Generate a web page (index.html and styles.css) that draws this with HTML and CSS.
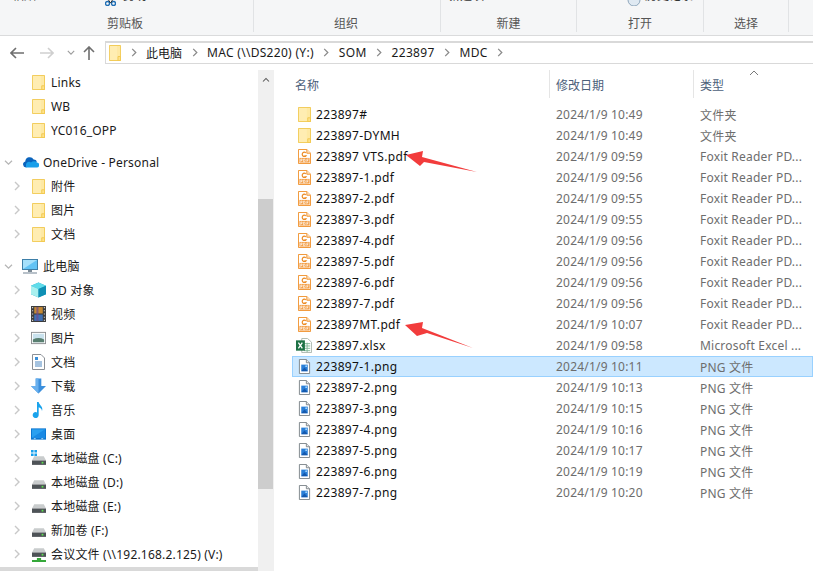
FILE: index.html
```html
<!DOCTYPE html>
<html lang="zh">
<head>
<meta charset="utf-8">
<title>MDC</title>
<link rel="stylesheet" href="styles.css">
</head>
<body>
<svg class="defs" width="0" height="0" aria-hidden="true">
  <symbol id="folder" viewBox="0 0 14 16" preserveAspectRatio="none">
    <path d="M.5.5H13.5V15.5H.5Z" fill="#fee9a4" stroke="#f1c84f"/>
    <path d="M1 1H9.5V15H1Z" fill="#fff0bd" opacity=".6"/>
    <path d="M10.5 15.5V11.5H13.5V15.5Z" fill="#ffe28a" stroke="#f1c84f"/>
  </symbol>
  <symbol id="pdf" viewBox="0 0 14 16" preserveAspectRatio="none">
    <path d="M.5.5H9.5L13.5 4.5V15.5H.5Z" fill="#fff" stroke="#f0902a"/>
    <path d="M9.5.5V4.5H13.5" fill="#fde3c4" stroke="#f0902a"/>
    <path d="M8.4 4A2.3 2.3 0 1 0 8.6 7.2H6.8" fill="none" stroke="#ec8a22" stroke-width="1.3"/>
    <rect x="1.5" y="9.5" width="11" height="5" fill="#f3a04a"/>
    <path d="M3 10.7v3M3 10.7h1.4v1.5H3M6 10.7v3h1.2l.6-1-.6-2ZM9.6 13.7v-3h1.8M9.6 12.2h1.4" fill="none" stroke="#fff" stroke-width=".7"/>
  </symbol>
  <symbol id="xlsx" viewBox="0 0 18 16" preserveAspectRatio="none">
    <path d="M6.5.5H13L17.5 4.5V15.5H6.5Z" fill="#fff" stroke="#a9b5ad"/>
    <path d="M9 6h7M9 8.5h7M9 11h7M9 13.5h7M12.5 5v10" stroke="#7fb596" stroke-width="1"/>
    <rect x="0" y="2.5" width="10" height="11" fill="#1d7145"/>
    <path d="M2.7 5l4.4 6M7.1 5l-4.4 6" stroke="#fff" stroke-width="1.5"/>
  </symbol>
  <symbol id="png" viewBox="0 0 14 16" preserveAspectRatio="none">
    <path d="M1.5.5H9L12.5 4V15.5H1.5Z" fill="#fff" stroke="#7c8389"/>
    <path d="M9 .5V4H12.5" fill="#e8e8e8" stroke="#7c8389"/>
    <rect x="3.5" y="6" width="7" height="7" fill="#2a7fd8"/>
    <path d="M3.5 13L7 9l3.5 4Z" fill="#1559ae"/>
    <circle cx="8.8" cy="7.6" r="1" fill="#a6d6fa"/>
  </symbol>
  <symbol id="cloud" viewBox="0 0 17 12">
    <path d="M4 11.5A3 3 0 0 1 3.3 5.6 4.4 4.4 0 0 1 11.6 3.6 3.6 3.6 0 0 1 15 5.6L8 8.6Z" fill="#0b64bd"/>
    <path d="M4 11.5H14.4A2.4 2.4 0 0 0 15 6.5 4 4 0 0 0 9 6.6 3 3 0 0 0 4 8.6Z" fill="#1a9fea"/>
  </symbol>
  <symbol id="pc" viewBox="0 0 16 15">
    <rect x=".5" y=".5" width="15" height="10" fill="#62c3f5" stroke="#3d7fa8"/>
    <path d="M1 1H15L1 10Z" fill="#a5e0fb"/>
    <path d="M6 11h4v2H6Z" fill="#7d8b96"/>
    <path d="M1 14h14" stroke="#9aa7b2" stroke-width="1.4"/>
  </symbol>
  <symbol id="cube" viewBox="0 0 16 16">
    <path d="M8 0L16 3.5V12.5L8 16 0 12.5V3.5Z" fill="#20a5c9"/>
    <path d="M8 0L16 3.5 8 7 0 3.5Z" fill="#5fdcea"/>
    <path d="M0 3.5L8 7V16L0 12.5Z" fill="#a9f0ef"/>
    <path d="M8 7L16 3.5V12.5L8 16Z" fill="#0f8fb4"/>
  </symbol>
  <symbol id="film" viewBox="0 0 14 15">
    <rect width="14" height="15" fill="#3c3c3c"/>
    <path d="M1 1.5h1M1 4.5h1M1 7.5h1M1 10.5h1M1 13.5h1M12 1.5h1M12 4.5h1M12 7.5h1M12 10.5h1M12 13.5h1" stroke="#ddd"/>
    <rect x="3" y="1" width="8" height="6" fill="#c58a34"/>
    <rect x="3" y="8" width="8" height="6" fill="#3f70b5"/>
    <path d="M5 1h2v13H5Z" fill="#6e4a8c" opacity=".7"/>
  </symbol>
  <symbol id="pic" viewBox="0 0 16 13">
    <rect x=".5" y=".5" width="15" height="12" fill="#fff" stroke="#8c8f92"/>
    <rect x="2" y="2" width="12" height="9" fill="#c9e2ee"/>
    <path d="M2 8q6-3 12 0v3H2Z" fill="#587f70"/>
  </symbol>
  <symbol id="doc" viewBox="0 0 13 16">
    <path d="M.5.5H9L12.5 4V15.5H.5Z" fill="#fff" stroke="#8b9096"/>
    <rect x="3" y="3" width="3" height="3" fill="#3a8fd9"/>
    <path d="M3 8h7M3 10h7M3 12h7" stroke="#4c88c2"/>
  </symbol>
  <symbol id="down" viewBox="0 0 16 16">
    <path d="M5 0H11V8H16L8 16 0 8H5Z" fill="#3b8fdd"/>
    <path d="M5 0H8V16L0 8H5Z" fill="#69b0ee"/>
  </symbol>
  <symbol id="music" viewBox="0 0 12 16">
    <path d="M4.5 0H6.2C6.6 3 11 4.5 9.5 9 9.4 6.8 7.6 5.6 6.2 5.2V13A3 3 0 1 1 4.5 10.4Z" fill="#1aa3ec"/>
  </symbol>
  <symbol id="desk" viewBox="0 0 16 12">
    <rect width="16" height="12" fill="#0c76d0"/>
    <rect x="1" y="1" width="14" height="9" fill="#2aa0f0"/>
    <path d="M1 10L15 1v9Z" fill="#1a8ae4"/>
    <path d="M3 11h2M11 11h2" stroke="#bfe3fb"/>
  </symbol>
  <symbol id="drive" viewBox="0 0 16 10">
    <path d="M2.5 0H13.5L16 5H0Z" fill="#c9cccd"/>
    <rect y="5" width="16" height="5" fill="#4e5357"/>
    <rect x="11" y="6.5" width="2" height="2" fill="#5be04d"/>
  </symbol>
  <symbol id="win" viewBox="0 0 6 6">
    <path d="M0 0h2.6v2.6H0ZM3.4 0H6v2.6H3.4ZM0 3.4h2.6V6H0ZM3.4 3.4H6V6H3.4Z" fill="#18a0ec"/>
  </symbol>
  <symbol id="chev" viewBox="0 0 8 10">
    <path d="M2 1l4 4-4 4" fill="none" stroke="currentColor" stroke-width="1.4"/>
  </symbol>
  <symbol id="chevd" viewBox="0 0 10 8">
    <path d="M1 2l4 4 4-4" fill="none" stroke="currentColor" stroke-width="1.4"/>
  </symbol>
</svg>

<header class="ribbon">
  <div class="group">
    <div class="peek peek-clip">
      <span class="peek-a">粘贴</span>
      <svg class="scissors" viewBox="0 0 11 7"><circle cx="2.5" cy="3.5" r="2" fill="none" stroke="#1f6fb5" stroke-width="1.4"/><circle cx="8.5" cy="3.5" r="2" fill="none" stroke="#1f6fb5" stroke-width="1.4"/><path d="M3.5 0l2 3 2-3" fill="none" stroke="#333"/></svg>
      <span class="peek-b">剪切</span>
    </div>
    <div class="label label-a">剪贴板</div>
  </div>
  <div class="group"><div class="peek"></div><div class="label label-b">组织</div></div>
  <div class="group">
    <div class="peek peek-clip"><span class="peek-c">新建项</span></div>
    <div class="label">新建</div>
  </div>
  <div class="group">
    <div class="peek peek-clip">
      <svg class="prop" viewBox="0 0 14 7"><circle cx="7" cy="0" r="6" fill="#dfe9f2" stroke="#8ea6bb"/></svg>
      <span class="peek-d">历史记录</span>
    </div>
    <div class="label">打开</div>
  </div>
  <div class="group"><div class="peek"></div><div class="label">选择</div></div>
  <div class="group group-end"></div>
</header>

<nav class="navbar">
  <div class="nav-buttons">
    <svg class="nav-back" viewBox="0 0 14 12"><path d="M1 6h13M6 1L1 6l5 5" fill="none" stroke="#6f6f6f" stroke-width="1.6"/></svg>
    <svg class="nav-fwd" viewBox="0 0 14 12"><path d="M13 6H0M8 1l5 5-5 5" fill="none" stroke="#cfcfcf" stroke-width="1.6"/></svg>
    <svg class="nav-drop"><use href="#chevd"/></svg>
    <svg class="nav-up" viewBox="0 0 12 14"><path d="M6 14V1M1 6l5-5 5 5" fill="none" stroke="#6f6f6f" stroke-width="1.6"/></svg>
  </div>
  <div class="address">
    <svg class="addr-folder"><use href="#folder"/></svg>
    <svg class="crumb-sep"><use href="#chev"/></svg>
    <span>此电脑</span>
    <svg class="crumb-sep"><use href="#chev"/></svg>
    <span class="lat">MAC (\\DS220) (Y:)</span>
    <svg class="crumb-sep"><use href="#chev"/></svg>
    <span class="lat">SOM</span>
    <svg class="crumb-sep"><use href="#chev"/></svg>
    <span class="lat">223897</span>
    <svg class="crumb-sep"><use href="#chev"/></svg>
    <span class="lat">MDC</span>
    <svg class="crumb-sep"><use href="#chev"/></svg>
  </div>
</nav>

<div class="content">
  <aside class="side">
    <div class="tree-wrap">
      <ul class="tree">
        <li class="node child"><span class="tw"></span><svg class="ico-f"><use href="#folder"/></svg><span>Links</span></li>
        <li class="node child"><span class="tw"></span><svg class="ico-f"><use href="#folder"/></svg><span>WB</span></li>
        <li class="node child"><span class="tw"></span><svg class="ico-f"><use href="#folder"/></svg><span>YC016_OPP</span></li>
        <li class="node root spaced"><svg class="tw-svg"><use href="#chevd"/></svg><svg class="ico-cloud"><use href="#cloud"/></svg><span>OneDrive - Personal</span></li>
        <li class="node child"><svg class="tw-svg-r"><use href="#chev"/></svg><svg class="ico-f"><use href="#folder"/></svg><span>附件</span></li>
        <li class="node child"><svg class="tw-svg-r"><use href="#chev"/></svg><svg class="ico-f"><use href="#folder"/></svg><span>图片</span></li>
        <li class="node child"><svg class="tw-svg-r"><use href="#chev"/></svg><svg class="ico-f"><use href="#folder"/></svg><span>文档</span></li>
        <li class="node root spaced"><svg class="tw-svg"><use href="#chevd"/></svg><svg class="ico-pc"><use href="#pc"/></svg><span>此电脑</span></li>
        <li class="node child"><svg class="tw-svg-r"><use href="#chev"/></svg><svg class="ico"><use href="#cube"/></svg><span>3D 对象</span></li>
        <li class="node child"><svg class="tw-svg-r"><use href="#chev"/></svg><svg class="ico"><use href="#film"/></svg><span>视频</span></li>
        <li class="node child"><svg class="tw-svg-r"><use href="#chev"/></svg><svg class="ico"><use href="#pic"/></svg><span>图片</span></li>
        <li class="node child"><svg class="tw-svg-r"><use href="#chev"/></svg><svg class="ico"><use href="#doc"/></svg><span>文档</span></li>
        <li class="node child"><svg class="tw-svg-r"><use href="#chev"/></svg><svg class="ico"><use href="#down"/></svg><span>下载</span></li>
        <li class="node child"><svg class="tw-svg-r"><use href="#chev"/></svg><svg class="ico"><use href="#music"/></svg><span>音乐</span></li>
        <li class="node child"><svg class="tw-svg-r"><use href="#chev"/></svg><svg class="ico"><use href="#desk"/></svg><span>桌面</span></li>
        <li class="node child"><svg class="tw-svg-r"><use href="#chev"/></svg><span class="drive-box"><svg class="win"><use href="#win"/></svg><svg class="drv"><use href="#drive"/></svg></span><span>本地磁盘 (C:)</span></li>
        <li class="node child"><svg class="tw-svg-r"><use href="#chev"/></svg><span class="drive-box"><svg class="drv"><use href="#drive"/></svg></span><span>本地磁盘 (D:)</span></li>
        <li class="node child"><svg class="tw-svg-r"><use href="#chev"/></svg><span class="drive-box"><svg class="drv"><use href="#drive"/></svg></span><span>本地磁盘 (E:)</span></li>
        <li class="node child"><svg class="tw-svg-r"><use href="#chev"/></svg><span class="drive-box"><svg class="drv"><use href="#drive"/></svg></span><span>新加卷 (F:)</span></li>
        <li class="node child"><svg class="tw-svg-r"><use href="#chev"/></svg><span class="drive-box net"><svg class="drv"><use href="#drive"/></svg><span class="net-foot"></span></span><span>会议文件 (\\192.168.2.125) (V:)</span></li>
      </ul>
      <div class="hscroll"></div>
    </div>
    <div class="vscroll">
      <svg class="vs-up"><use href="#chevd"/></svg>
      <div class="vs-track-top"></div>
      <div class="vs-thumb"></div>
    </div>
  </aside>

  <main class="files">
    <div class="head">
      <div class="col-name">名称</div>
      <div class="col-date">修改日期</div>
      <div class="col-type">类型</div>
      <svg class="sort" viewBox="0 0 10 6"><path d="M1 5l4-4 4 4" fill="none" stroke="#7a7a7a"/></svg>
    </div>
    <div class="rows">
      <div class="row"><div class="col-name"><svg class="fi"><use href="#folder"/></svg>223897#</div><div class="col-date">2024/1/9 10:49</div><div class="col-type">文件夹</div></div>
      <div class="row"><div class="col-name"><svg class="fi"><use href="#folder"/></svg>223897-DYMH</div><div class="col-date">2024/1/9 10:49</div><div class="col-type">文件夹</div></div>
      <div class="row"><div class="col-name"><svg class="fi"><use href="#pdf"/></svg>223897 VTS.pdf</div><div class="col-date">2024/1/9 09:59</div><div class="col-type">Foxit Reader PD...</div></div>
      <div class="row"><div class="col-name"><svg class="fi"><use href="#pdf"/></svg>223897-1.pdf</div><div class="col-date">2024/1/9 09:56</div><div class="col-type">Foxit Reader PD...</div></div>
      <div class="row"><div class="col-name"><svg class="fi"><use href="#pdf"/></svg>223897-2.pdf</div><div class="col-date">2024/1/9 09:55</div><div class="col-type">Foxit Reader PD...</div></div>
      <div class="row"><div class="col-name"><svg class="fi"><use href="#pdf"/></svg>223897-3.pdf</div><div class="col-date">2024/1/9 09:55</div><div class="col-type">Foxit Reader PD...</div></div>
      <div class="row"><div class="col-name"><svg class="fi"><use href="#pdf"/></svg>223897-4.pdf</div><div class="col-date">2024/1/9 09:56</div><div class="col-type">Foxit Reader PD...</div></div>
      <div class="row"><div class="col-name"><svg class="fi"><use href="#pdf"/></svg>223897-5.pdf</div><div class="col-date">2024/1/9 09:56</div><div class="col-type">Foxit Reader PD...</div></div>
      <div class="row"><div class="col-name"><svg class="fi"><use href="#pdf"/></svg>223897-6.pdf</div><div class="col-date">2024/1/9 09:56</div><div class="col-type">Foxit Reader PD...</div></div>
      <div class="row"><div class="col-name"><svg class="fi"><use href="#pdf"/></svg>223897-7.pdf</div><div class="col-date">2024/1/9 09:56</div><div class="col-type">Foxit Reader PD...</div></div>
      <div class="row"><div class="col-name"><svg class="fi"><use href="#pdf"/></svg>223897MT.pdf</div><div class="col-date">2024/1/9 10:07</div><div class="col-type">Foxit Reader PD...</div></div>
      <div class="row"><div class="col-name"><svg class="fi fi-x"><use href="#xlsx"/></svg>223897.xlsx</div><div class="col-date">2024/1/9 09:58</div><div class="col-type">Microsoft Excel ...</div></div>
      <div class="row selected"><div class="col-name"><svg class="fi"><use href="#png"/></svg>223897-1.png</div><div class="col-date">2024/1/9 10:11</div><div class="col-type">PNG 文件</div></div>
      <div class="row"><div class="col-name"><svg class="fi"><use href="#png"/></svg>223897-2.png</div><div class="col-date">2024/1/9 10:13</div><div class="col-type">PNG 文件</div></div>
      <div class="row"><div class="col-name"><svg class="fi"><use href="#png"/></svg>223897-3.png</div><div class="col-date">2024/1/9 10:15</div><div class="col-type">PNG 文件</div></div>
      <div class="row"><div class="col-name"><svg class="fi"><use href="#png"/></svg>223897-4.png</div><div class="col-date">2024/1/9 10:16</div><div class="col-type">PNG 文件</div></div>
      <div class="row"><div class="col-name"><svg class="fi"><use href="#png"/></svg>223897-5.png</div><div class="col-date">2024/1/9 10:17</div><div class="col-type">PNG 文件</div></div>
      <div class="row"><div class="col-name"><svg class="fi"><use href="#png"/></svg>223897-6.png</div><div class="col-date">2024/1/9 10:19</div><div class="col-type">PNG 文件</div></div>
      <div class="row"><div class="col-name"><svg class="fi"><use href="#png"/></svg>223897-7.png</div><div class="col-date">2024/1/9 10:20</div><div class="col-type">PNG 文件</div></div>
    </div>
  </main>
</div>

<svg class="annotations" viewBox="0 0 813 571" aria-hidden="true">
  <polygon points="406,155 423,151 422,157 477,172 424,162 420,166" fill="#f23c3c"/>
  <polygon points="405,325 423,322 422,328 473,348 427,333 417,336" fill="#f23c3c"/>
</svg>
</body>
</html>
```
FILE: styles.css
```css
* { box-sizing: border-box; }
html, body { margin: 0; padding: 0; }
body {
  position: relative;
  width: 813px;
  height: 571px;
  overflow: hidden;
  background: #fff;
  color: #111;
  font-family: "Noto Sans", "Noto Sans CJK SC", sans-serif;
  font-size: 12px;
}
.defs { position: absolute; }
ul { list-style: none; margin: 0; padding: 0; }

/* ribbon */
.ribbon {
  display: grid;
  grid-template-columns: 254px 187px 136px 127px 85px 24px;
  height: 36px;
  background: #f5f6f7;
  border-bottom: 1px solid #dadbdc;
}
.group {
  height: 32px;
  border-right: 1px solid #e1e3e5;
  display: flex;
  flex-direction: column;
}
.group-end { border-right: 0; }
.peek { height: 6px; flex: none; display: flex; align-items: flex-start; }
.peek-clip { overflow: hidden; }
.peek-clip span { margin-top: -12px; color: #333; line-height: 16px; }
.peek-a { margin-left: 12px; width: 93px; }
.peek-b { margin-left: 7px; }
.peek-c { margin-left: 7px; }
.scissors { width: 11px; height: 7px; }
.prop { width: 14px; height: 7px; margin-left: 50px; }
.peek-d { margin-left: 4px; }
.label {
  flex: 1;
  display: flex;
  align-items: center;
  justify-content: center;
  padding-top: 8px;
  color: #555;
}
.label-a { padding-right: 3px; }
.label-b { padding-right: 2px; }

/* address row */
.navbar {
  height: 34px;
  display: flex;
  align-items: flex-start;
  padding-top: 5px;
}
.nav-buttons {
  width: 105px;
  height: 23px;
  display: flex;
  align-items: center;
  flex: none;
}
.nav-back { width: 14px; height: 12px; margin-left: 10px; }
.nav-fwd { width: 14px; height: 12px; margin-left: 16px; }
.nav-drop { width: 8px; height: 7px; margin-left: 13px; color: #9c9c9c; }
.nav-up { width: 12px; height: 14px; margin-left: 8px; }
.address {
  flex: 1;
  height: 23px;
  border: 1px solid #d9d9d9;
  border-top-width: 2px;
  border-right: 0;
  display: flex;
  align-items: center;
  gap: 8.5px;
  padding: 0 0 1px 3px;
  color: #1a1a1a;
}
.lat { letter-spacing: .3px; }
.addr-folder { width: 12px; height: 16px; }
.crumb-sep { width: 8px; height: 9px; color: #8a8a8a; }

/* main area */
.content {
  display: flex;
  height: 501px;
}
.side {
  width: 274px;
  flex: none;
  display: flex;
  border-right: 1px solid #f0f0f0;
}
.tree-wrap { width: 258px; position: relative; overflow: hidden; }
.tree { height: 497px; overflow: hidden; }
.node { height: 24px; display: flex; align-items: center; white-space: nowrap; color: #1a1a1a; letter-spacing: .2px; }
.spaced { margin-top: 8px; }
.child { padding-left: 13px; }
.root { padding-left: 4px; }
.tw { width: 8px; height: 9px; flex: none; }
.tw-svg-r { width: 8px; height: 10px; flex: none; color: #c8c8c8; }
.tw-svg { width: 9px; height: 7px; flex: none; color: #b5b5b5; }
.ico { width: 15px; height: 16px; flex: none; margin: 0 5px 0 10px; }
.ico-f { width: 13px; height: 15px; flex: none; margin: 0 6px 0 11px; }
.ico-cloud { width: 17px; height: 12px; flex: none; margin: 0 4px 0 9px; }
.ico-pc { width: 16px; height: 15px; flex: none; margin: 0 5px 0 9px; }
.drive-box {
  width: 16px;
  height: 16px;
  margin: 0 4px 0 10px;
  flex: none;
  display: flex;
  flex-direction: column;
  justify-content: flex-end;
  align-items: center;
}
.win { width: 6px; height: 6px; align-self: flex-start; }
.drv { width: 14px; height: 9px; margin-bottom: 1px; }
.net { justify-content: flex-start; padding-top: 2px; }
.net-foot { width: 14px; height: 4px; background: #35a83a; clip-path: polygon(35% 0, 65% 0, 65% 50%, 100% 50%, 100% 100%, 0 100%, 0 50%, 35% 50%); }
.hscroll { height: 4px; background: #d9d9d9; }
.vscroll { width: 15px; background: #f0f0f0; display: flex; flex-direction: column; align-items: center; flex: none; }
.vs-up { width: 8px; height: 6px; margin-top: 7px; color: #555; transform: rotate(180deg); }
.vs-track-top { height: 116px; }
.vs-thumb { width: 15px; height: 290px; background: #cdcdcd; }

/* file list */
.files { flex: 1; min-width: 0; }
.head {
  position: relative;
  height: 28px;
  display: flex;
  color: #4c607a;
  padding-left: 18px;
}
.head .col-name, .head .col-date, .head .col-type {
  display: flex;
  align-items: center;
  height: 28px;
  padding-top: 1px;
}
.head .col-name { width: 257px; padding-left: 3px; }
.head .col-date { width: 144px; padding-left: 6px; border-left: 1px solid #e5e5e5; }
.head .col-type { flex: 1; padding-left: 6px; border-left: 1px solid #e5e5e5; }
.sort { position: absolute; left: 475px; top: 0; width: 10px; height: 6px; }
.rows { padding: 6px 0 0 18px; }
.row {
  height: 21px;
  display: flex;
  align-items: center;
  border: 1px solid transparent;
  white-space: nowrap;
  letter-spacing: .2px;
}
.row .col-name { width: 257px; display: flex; align-items: center; padding-left: 5px; color: #111; letter-spacing: .35px; }
.row .col-date { width: 144px; padding-left: 6px; color: #6d6d6d; }
.row .col-type { flex: 1; padding-left: 6px; color: #6d6d6d; overflow: hidden; }
.selected { background: #cce8ff; border-color: #99d1ff; }
.fi { width: 13px; height: 15px; margin-right: 5px; flex: none; }
.fi-x { width: 16px; margin-left: -2px; margin-right: 4px; }

/* hand-drawn annotations lying over the list */
.annotations { position: absolute; left: 0; top: 0; width: 813px; height: 571px; pointer-events: none; }
```
